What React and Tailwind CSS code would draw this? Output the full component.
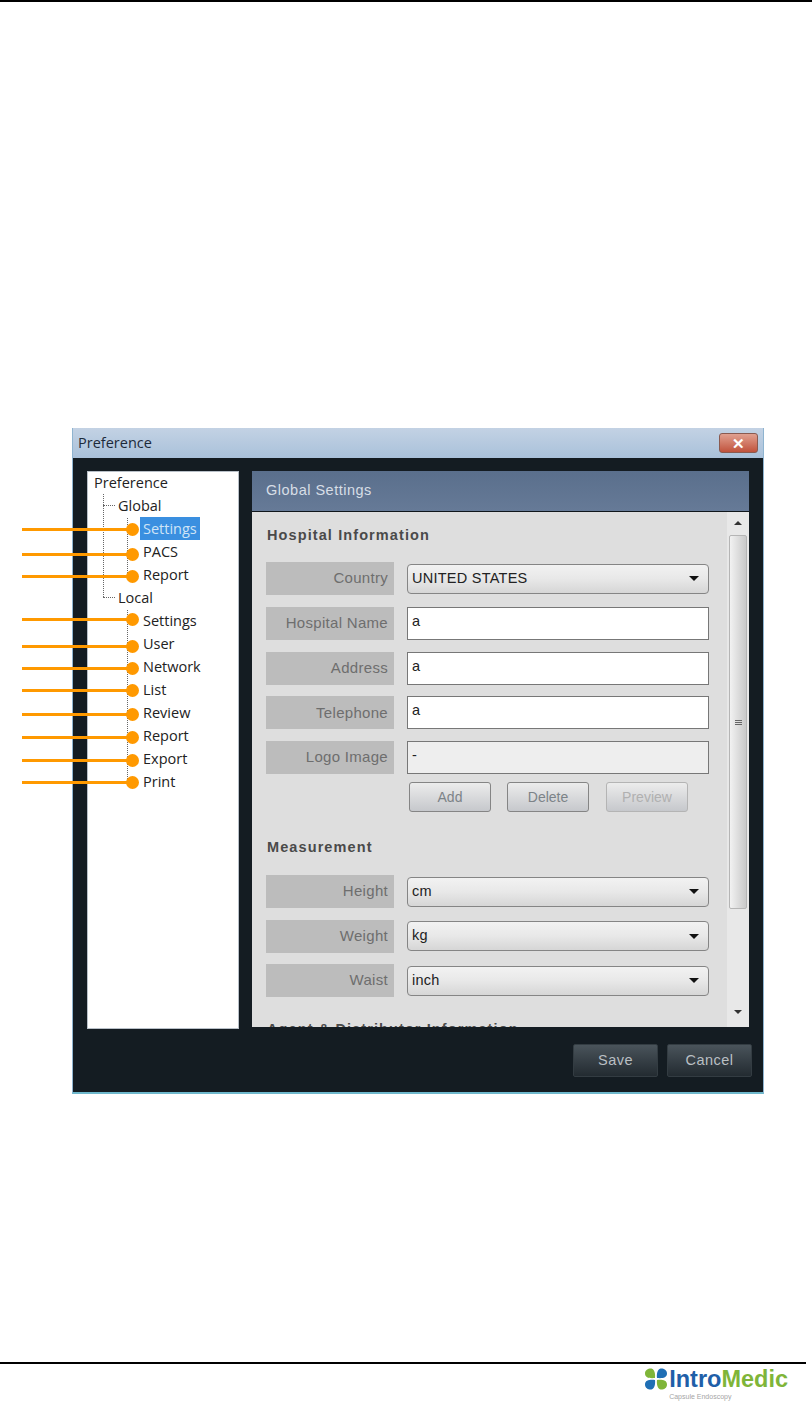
import React from "react";

const treeRows = [
  { label: "Preference", indent: "pl-[6px]" },
  { label: "Global", indent: "pl-[30px]" },
  { label: "Settings", indent: "pl-[55px]", mark: "top-[6px]", selected: true },
  { label: "PACS", indent: "pl-[55px]", mark: "top-[8px]" },
  { label: "Report", indent: "pl-[55px]", mark: "top-[7px]" },
  { label: "Local", indent: "pl-[30px]" },
  { label: "Settings", indent: "pl-[55px]", mark: "top-[4px]" },
  { label: "User", indent: "pl-[55px]", mark: "top-[8px]" },
  { label: "Network", indent: "pl-[55px]", mark: "top-[7px]" },
  { label: "List", indent: "pl-[55px]", mark: "top-[6px]" },
  { label: "Review", indent: "pl-[55px]", mark: "top-[7px]" },
  { label: "Report", indent: "pl-[55px]", mark: "top-[7px]" },
  { label: "Export", indent: "pl-[55px]", mark: "top-[7px]" },
  { label: "Print", indent: "pl-[55px]", mark: "top-[6px]" },
];

function Callout({ mark }) {
  return (
    <div className={`absolute -left-[66px] z-10 flex items-center ${mark}`}>
      <div className="h-[3px] w-[105px] bg-[#ff9900]" />
      <div className="-ml-[1px] h-[13px] w-[13px] rounded-full bg-[#ff9900]" />
    </div>
  );
}

function TreeRow({ row }) {
  return (
    <div className={`relative h-[23px] leading-[23px] ${row.indent}`}>
      {row.mark && <Callout mark={row.mark} />}
      <span className={row.selected ? "-ml-[3px] inline-block h-[23px] w-[60px] bg-[#3a8fe0] pl-[3px] text-[#cfe4f7]" : ""}>
        {row.label}
      </span>
    </div>
  );
}

function Label({ children }) {
  return (
    <div className="flex h-[33px] w-[128px] shrink-0 items-center justify-end bg-[#bcbcbc] pr-[6px] text-[15px] tracking-[0.3px] text-[#6e6e6e]">
      {children}
    </div>
  );
}

function Select({ value }) {
  return (
    <div className="flex h-[30px] w-[302px] items-center justify-between rounded-[4px] border border-[#858585] bg-gradient-to-b from-[#f2f2f2] via-[#e8e8e8] to-[#d6d6d6] pl-[4px] pr-[9px] text-[14.5px] tracking-[0.25px] text-[#222222]">
      <span>{value}</span>
      <div className="h-0 w-0 border-x-[5px] border-t-[5px] border-x-transparent border-t-[#111111]" />
    </div>
  );
}

function TextInput({ value, disabled }) {
  return (
    <div className={`flex h-[33px] w-[302px] items-center border border-[#777777] pb-[3px] pl-[4px] text-[14.5px] text-[#222222] ${disabled ? "bg-[#eeeeee]" : "bg-white"}`}>
      {value}
    </div>
  );
}

function Field({ label, children }) {
  return (
    <div className="flex h-[33px] items-center gap-[13px]">
      <Label>{label}</Label>
      {children}
    </div>
  );
}

function SmallButton({ children, faded }) {
  return (
    <div className={`flex h-[30px] w-[82px] items-center justify-center rounded-[3px] border bg-gradient-to-b from-[#ececec] to-[#c6c8cc] text-[14px] ${faded ? "border-[#b4b4b4] text-[#b0b0b0]" : "border-[#858585] text-[#7c8388]"}`}>
      {children}
    </div>
  );
}

function DarkButton({ children }) {
  return (
    <div className="flex h-[33px] w-[85px] items-center justify-center rounded-[2px] border border-[#333c42] bg-gradient-to-b from-[#4a545b] to-[#232b31] text-[14.5px] tracking-[0.5px] text-[#b9bfc3]">
      {children}
    </div>
  );
}

function Heading({ children }) {
  return <div className="ml-[1px] text-[14.5px] leading-[20px] font-bold tracking-[1.1px] text-[#4a4a4a]">{children}</div>;
}

function Scrollbar() {
  return (
    <div className="flex w-[22px] shrink-0 flex-col items-center bg-[#e8e8e8]">
      <div className="mt-[9px] h-0 w-0 border-x-[4px] border-b-[4px] border-x-transparent border-b-[#333333]" />
      <div className="mt-[10px] flex h-[374px] w-[18px] items-center justify-center rounded-[2px] border border-[#b5b5b5] bg-gradient-to-r from-[#f2f2f2] to-[#c9c9c9]">
        <div className="flex flex-col gap-[1px]">
          <div className="h-[1px] w-[7px] bg-[#666666]" />
          <div className="h-[1px] w-[7px] bg-[#666666]" />
          <div className="h-[1px] w-[7px] bg-[#666666]" />
        </div>
      </div>
      <div className="mt-[101px] h-0 w-0 border-x-[4px] border-t-[4px] border-x-transparent border-t-[#333333]" />
    </div>
  );
}

function Logo() {
  return (
    <div className="flex items-start gap-[1px]">
      <svg width="24" height="22" viewBox="0 0 24 22" className="shrink-0">
        <path d="M11 10 C6 10.5 1 10 1 5.5 C1 1.5 5 0 7.5 0.5 C10.5 1 11.5 6 11 10Z" fill="#7fb539" />
        <path d="M13 10 C18 10.5 23 10 23 5.5 C23 1.5 19 0 16.5 0.5 C13.5 1 12.5 6 13 10Z" fill="#1f6fb5" />
        <path d="M11 12 C6 11.5 1 12 1 16.5 C1 20.5 5 22 7.5 21.5 C10.5 21 11.5 16 11 12Z" fill="#1f6fb5" />
        <path d="M13 12 C18 11.5 23 12 23 16.5 C23 20.5 19 22 16.5 21.5 C13.5 21 12.5 16 13 12Z" fill="#7fb539" />
      </svg>
      <div className="flex flex-col">
        <div className="mt-[1px] text-[23.5px] leading-[20px] font-bold">
          <span className="text-[#1f5fa8]">Intro</span>
          <span className="text-[#7fb539]">Medic</span>
        </div>
        <div className="mt-[4px] text-[7px] leading-[8px] text-[#a5a5a5]">Capsule Endoscopy</div>
      </div>
    </div>
  );
}

export default function App() {
  return (
    <div className="flex h-[1404px] w-[812px] flex-col bg-white font-['Liberation_Sans',sans-serif]">
      <div className="h-[2px] w-full shrink-0 bg-black" />
      <div className="mt-[426px] ml-[72px] flex h-[666px] w-[692px] shrink-0 flex-col border-x border-b-2 border-x-[#8fb4d0] border-b-[#6fb8cc] bg-[#141c22]">
        {/* title bar */}
        <div className="flex h-[30px] shrink-0 items-center justify-between bg-gradient-to-b from-[#c3d2e4] to-[#a9c1da] pr-[5px] pl-[5px] text-[14.5px] text-[#1c2a3a] font-['Open_Sans',sans-serif]">
          <span>Preference</span>
          <div className="flex h-[20px] w-[39px] items-center justify-center rounded-[3px] border border-[#8a5a50] bg-gradient-to-b from-[#e0a090] to-[#c0523c] text-[15px] leading-none font-bold text-white">
            ✕
          </div>
        </div>

        <div className="flex gap-[13px] pt-[13px] pl-[14px]">
          {/* tree */}
          <div className="relative h-[558px] w-[152px] shrink-0 border border-[#b8c0c8] bg-white text-[14.5px] text-[#222222] font-['Open_Sans',sans-serif]">
            <div className="absolute top-[22px] left-[15px] h-[103px] border-l border-dotted border-[#666666]" />
            <div className="absolute top-[33px] left-[15px] w-[12px] border-t border-dotted border-[#666666]" />
            <div className="absolute top-[125px] left-[15px] w-[12px] border-t border-dotted border-[#666666]" />
            <div className="absolute top-[46px] left-[39px] h-[57px] border-l border-dotted border-[#666666]" />
            <div className="absolute top-[138px] left-[39px] h-[173px] border-l border-dotted border-[#666666]" />
            <div className="-mt-[1px]">
              {treeRows.map((row, i) => (
                <TreeRow key={i} row={row} />
              ))}
            </div>
          </div>

          {/* settings panel */}
          <div className="flex h-[556px] w-[497px] shrink-0 flex-col">
            <div className="flex h-[41px] shrink-0 items-center border-b border-[#10161b] bg-gradient-to-b from-[#5a6f8c] to-[#667a97] pl-[14px] text-[14.5px] tracking-[0.5px] text-[#d7dee6]">
              Global Settings
            </div>
            <div className="flex min-h-0 flex-1 overflow-hidden bg-[#dedede]">
              <div className="min-w-0 flex-1 overflow-hidden pt-[13px] pl-[14px]">
                <Heading>Hospital Information</Heading>
                <div className="mt-[17px] flex flex-col gap-[11.75px]">
                  <Field label="Country"><Select value="UNITED STATES" /></Field>
                  <Field label="Hospital Name"><TextInput value="a" /></Field>
                  <Field label="Address"><TextInput value="a" /></Field>
                  <Field label="Telephone"><TextInput value="a" /></Field>
                  <Field label="Logo Image"><TextInput value="-" disabled /></Field>
                </div>
                <div className="mt-[8px] ml-[143px] flex gap-[16px]">
                  <SmallButton>Add</SmallButton>
                  <SmallButton>Delete</SmallButton>
                  <div className="ml-[1px]">
                    <SmallButton faded>Preview</SmallButton>
                  </div>
                </div>
                <div className="mt-[25px]">
                  <Heading>Measurement</Heading>
                </div>
                <div className="mt-[18px] flex flex-col gap-[11.5px]">
                  <Field label="Height"><Select value="cm" /></Field>
                  <Field label="Weight"><Select value="kg" /></Field>
                  <Field label="Waist"><Select value="inch" /></Field>
                </div>
                <div className="mt-[22px]">
                  <Heading>Agent &amp; Distributor Information</Heading>
                </div>
              </div>
              <Scrollbar />
            </div>
          </div>
        </div>

        <div className="mt-[15px] ml-[500px] flex gap-[9px]">
          <DarkButton>Save</DarkButton>
          <DarkButton>Cancel</DarkButton>
        </div>
      </div>

      <div className="mt-auto h-[42px]">
        <div className="h-[2px] w-[806px] bg-black" />
        <div className="flex justify-end pt-[4px] pr-[24px]">
          <Logo />
        </div>
      </div>
    </div>
  );
}
